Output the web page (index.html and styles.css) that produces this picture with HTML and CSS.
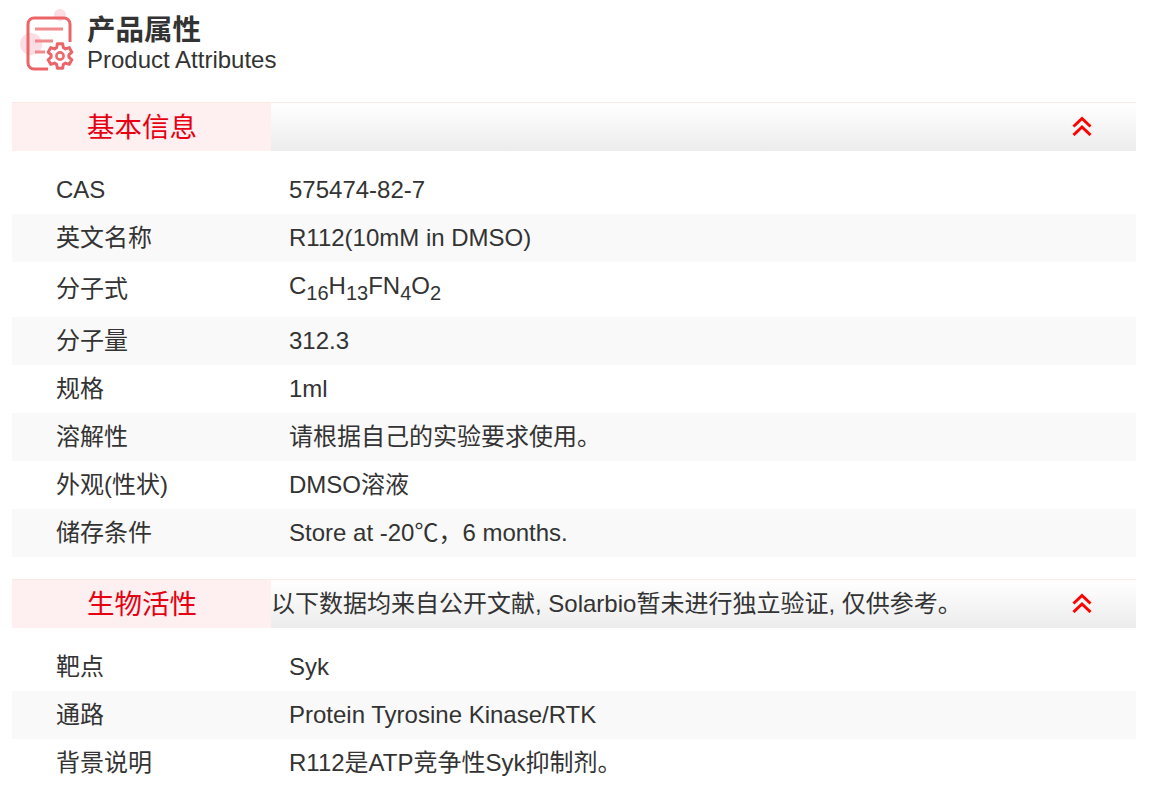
FILE: index.html
```html
<!DOCTYPE html>
<html lang="zh-CN">
<head>
<meta charset="utf-8">
<title>产品属性</title>
<link rel="stylesheet" href="styles.css">
</head>
<body>
<div class="page">
  <header class="title">
    <svg class="title-icon" viewBox="0 0 56 60" width="56" height="60" aria-hidden="true">
      <circle cx="38" cy="1" r="6" fill="#fbdde4"/>
      <circle cx="9" cy="30" r="11" fill="#fbdde4"/>
      <path d="M48 28V10a6 6 0 0 0-6-6H12a6 6 0 0 0-6 6v39a6 6 0 0 0 6 6h14" fill="none" stroke="#ec6468" stroke-width="3"/>
      <path d="M13 15h28M13 27h18M13 38h10" fill="none" stroke="#f08a8d" stroke-width="3"/>
      <path transform="translate(38 42)" d="M-3.400-8.300-2.600-12.200H2.600L3.400-8.300 5.490-7.090 9.270-8.350 11.870-3.850 8.890-1.210V1.210L11.870 3.850 9.270 8.350 5.490 7.090 3.400 8.300 2.600 12.200H-2.600L-3.400 8.300-5.490 7.090-9.270 8.350-11.870 3.850-8.890 1.210V-1.210L-11.870-3.850-9.270-8.350-5.490-7.090Z" fill="#fff" stroke="#ec6468" stroke-width="3" stroke-linejoin="round"/>
      <circle cx="38" cy="42" r="3.600" fill="none" stroke="#ec6b6f" stroke-width="2.600"/>
    </svg>
    <div class="title-text">
      <h1>产品属性</h1>
      <p>Product Attributes</p>
    </div>
  </header>

  <section class="group">
    <div class="bar">
      <h2>基本信息</h2>
      <span class="note"></span>
      <svg class="chev" viewBox="0 0 20 20" width="20" height="20" aria-hidden="true"><path d="M1.500 10.500 10 2.500l8.500 8M1.500 19 10 11l8.500 8" fill="none" stroke="#f00" stroke-width="3"/></svg>
    </div>
    <div class="rows">
      <div class="row"><span class="k">CAS</span><span class="v">575474-82-7</span></div>
      <div class="row"><span class="k">英文名称</span><span class="v">R112(10mM in DMSO)</span></div>
      <div class="row tall"><span class="k">分子式</span><span class="v">C<sub>16</sub>H<sub>13</sub>FN<sub>4</sub>O<sub>2</sub></span></div>
      <div class="row"><span class="k">分子量</span><span class="v">312.3</span></div>
      <div class="row"><span class="k">规格</span><span class="v">1ml</span></div>
      <div class="row"><span class="k">溶解性</span><span class="v">请根据自己的实验要求使用。</span></div>
      <div class="row"><span class="k">外观(性状)</span><span class="v">DMSO溶液</span></div>
      <div class="row"><span class="k">储存条件</span><span class="v">Store at -20℃，6 months.</span></div>
    </div>
  </section>

  <section class="group second">
    <div class="bar">
      <h2>生物活性</h2>
      <span class="note">以下数据均来自公开文献, Solarbio暂未进行独立验证, 仅供参考。</span>
      <svg class="chev" viewBox="0 0 20 20" width="20" height="20" aria-hidden="true"><path d="M1.500 10.500 10 2.500l8.500 8M1.500 19 10 11l8.500 8" fill="none" stroke="#f00" stroke-width="3"/></svg>
    </div>
    <div class="rows">
      <div class="row"><span class="k">靶点</span><span class="v">Syk</span></div>
      <div class="row"><span class="k">通路</span><span class="v">Protein Tyrosine Kinase/RTK</span></div>
      <div class="row"><span class="k">背景说明</span><span class="v">R112是ATP竞争性Syk抑制剂。</span></div>
    </div>
  </section>
</div>
</body>
</html>
```
FILE: styles.css
```css
* { box-sizing: border-box; }
html, body { margin: 0; background: #fff; }
body {
  font-family: "Liberation Sans", "Noto Sans CJK SC", sans-serif;
  color: #333;
  overflow: hidden;
}
.page { padding: 0 14px 0 12px; height: 802px; }
.title { display: flex; align-items: flex-start; height: 102px; padding: 12px 0 0 10px; }
.title-icon { flex: none; margin-top: 2px; overflow: visible; filter: blur(.6px); }
.title-text { margin-left: 9px; }
h1 { margin: 0; font-size: 28.5px; line-height: 36px; font-weight: 700; color: #333; }
.title-text p { margin: 0; font-size: 24px; line-height: 24px; color: #333; }
.bar {
  height: 49px;
  display: flex;
  align-items: center;
  border-top: 1px solid #fbe9e4;
  background: linear-gradient(#fff, #ececec);
}
.bar h2 {
  flex: none;
  width: 259px;
  height: 48px;
  margin: 0;
  padding-left: 75px;
  background: #feeff0;
  color: #e60012;
  font-size: 27.5px;
  font-weight: 400;
  line-height: 50px;
}
.note { flex: 1; font-size: 24px; line-height: 50px; color: #333; white-space: nowrap; }
.chev { flex: none; margin: 0 44px 2px 0; }
.rows { padding-top: 15px; }
.row { display: flex; height: 48px; align-items: center; font-size: 24px; line-height: 28px; color: #333; }
.row:nth-child(even) { background: #f9f9f9; }
.row.tall { height: 55px; padding-bottom: 2px; }
.k { flex: none; width: 277px; padding-left: 44px; }
.v { flex: 1; }
.v sub { font-size: 20px; line-height: normal; }
.second { margin-top: 22px; }
```
